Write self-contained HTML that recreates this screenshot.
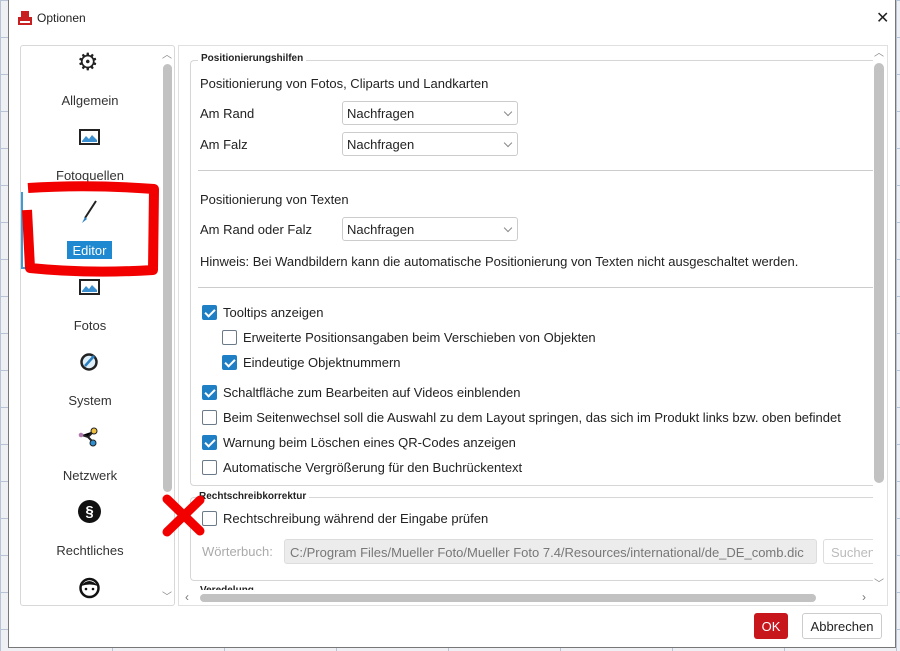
<!DOCTYPE html>
<html><head><meta charset="utf-8"><style>
*{box-sizing:border-box;margin:0;padding:0}
body{width:900px;height:651px;overflow:hidden;position:relative;font-family:"Liberation Sans",sans-serif;font-size:13px;color:#222;background:#eef0f4;
background-image:linear-gradient(#b9c3d6 1px,transparent 1px),linear-gradient(90deg,#b9c3d6 1px,transparent 1px);background-size:112px 37px}
.a{position:absolute}
#dlg{left:8px;top:0;width:888px;height:648px;background:#fff;border:1px solid #777;border-top:none}
.t{position:absolute;white-space:nowrap}
.dd{position:absolute;left:342px;width:176px;height:24px;border:1px solid #ccc;border-radius:3px;background:#fff;padding:4px 0 0 4px}
.dd::after{content:"";position:absolute;right:6px;top:7px;width:5px;height:5px;border-right:1px solid #888;border-bottom:1px solid #888;transform:rotate(45deg)}
.cb{position:absolute;width:15px;height:15px;border:1px solid #6a7a88;border-radius:2px;background:#fff}
.cb.on{background:#1f7fc4;border-color:#1f7fc4}
.cb.on::after{content:"";position:absolute;left:4px;top:1px;width:4px;height:8px;border-right:2px solid #fff;border-bottom:2px solid #fff;transform:rotate(45deg)}
.lbl{position:absolute;width:140px;left:20px;text-align:center;color:#333}
.hl{position:absolute;height:1px;background:#ccc}
</style></head><body>
<div id="dlg" class="a"></div>
<!-- title -->
<svg class="a" style="left:17px;top:10px" width="16" height="16" viewBox="0 0 16 16"><rect x="4" y="1" width="8" height="7" fill="#c82020"/><rect x="1" y="7" width="14" height="8" fill="#c82020"/><rect x="3" y="11" width="10" height="2" fill="#fff"/></svg>
<div class="t" style="left:37px;top:11px;font-size:12px">Optionen</div>
<div class="t" style="left:876px;top:8px;font-size:16px">✕</div>
<!-- left panel -->
<div class="a" style="left:20px;top:45px;width:155px;height:561px;border:1px solid #d8d8d8;border-radius:3px;background:#fff"></div>
<div class="a" style="left:163px;top:64px;width:9px;height:428px;background:#c2c2c2;border-radius:5px"></div>
<div class="t" style="left:162px;top:46px;color:#888;font-size:10px">︿</div>
<div class="t" style="left:162px;top:588px;color:#888;font-size:10px">﹀</div>
<!-- icons -->
<div class="t" style="left:77px;top:48px;font-size:24px;color:#222">⚙</div>
<div class="lbl" style="top:93px">Allgemein</div>
<svg class="a" style="left:79px;top:129px" width="21" height="16"><rect x="1" y="1" width="19" height="14" fill="#fff" stroke="#222" stroke-width="2"/><path d="M3 12 L7 7 L10 10 L13 6 L18 11 V13 H3Z" fill="#3a8fd0"/></svg>
<div class="lbl" style="top:168px">Fotoquellen</div>
<div class="a" style="left:21px;top:192px;width:137px;height:77px;border:2px solid #3d9bd6;border-top:none;border-right:none;background:#fff"></div>
<svg class="a" style="left:80px;top:200px" width="18" height="24"><path d="M16 1 L5 18" stroke="#222" stroke-width="2"/><path d="M5 17 L2 23 L7 19Z" fill="#2a7fc0"/></svg>
<div class="a" style="left:67px;top:241px;width:45px;height:18px;background:#1e88d0;color:#fff;text-align:center;padding-top:2px">Editor</div>
<svg class="a" style="left:79px;top:279px" width="21" height="16"><rect x="1" y="1" width="19" height="14" fill="#fff" stroke="#222" stroke-width="2"/><path d="M3 12 L7 7 L10 10 L13 6 L18 11 V13 H3Z" fill="#3a8fd0"/></svg>
<div class="lbl" style="top:318px">Fotos</div>
<svg class="a" style="left:79px;top:352px" width="20" height="20"><circle cx="10" cy="10" r="7.5" fill="#dff0fa" stroke="#222" stroke-width="2.5"/><path d="M6 14 L15 4" stroke="#2a7fc0" stroke-width="2.5"/></svg>
<div class="lbl" style="top:393px">System</div>
<svg class="a" style="left:78px;top:426px" width="22" height="22"><path d="M4 9 L10 11 L16 5 M10 11 L15 16" stroke="#222" stroke-width="2"/><circle cx="3" cy="9" r="2.3" fill="#b07ab0"/><circle cx="16" cy="5" r="3" fill="#f0c040" stroke="#222"/><circle cx="15" cy="17" r="3" fill="#2e8fd0" stroke="#222"/></svg>
<div class="lbl" style="top:468px">Netzwerk</div>
<div class="a" style="left:78px;top:500px;width:23px;height:23px;border-radius:50%;background:#111;color:#fff;text-align:center;font-size:15px;font-weight:bold;line-height:23px">§</div>
<div class="lbl" style="top:543px">Rechtliches</div>
<svg class="a" style="left:78px;top:576px" width="23" height="24"><circle cx="11.5" cy="12" r="9" fill="#fff" stroke="#111" stroke-width="2.5"/><path d="M3 10 Q11 0 20 10 Q12 7 3 10Z" fill="#111"/><circle cx="8" cy="13" r="1.3" fill="#111"/><circle cx="15" cy="13" r="1.3" fill="#111"/></svg>
<!-- right area -->
<div class="a" style="left:178px;top:45px;width:710px;height:561px;border:1px solid #e0e0e0;background:#fff"></div>
<div class="a" style="left:874px;top:63px;width:10px;height:420px;background:#c2c2c2;border-radius:5px"></div>
<div class="t" style="left:874px;top:44px;color:#888;font-size:10px">︿</div>
<div class="t" style="left:874px;top:575px;color:#888;font-size:10px">﹀</div>
<div class="a" style="left:200px;top:594px;width:616px;height:8px;background:#c2c2c2;border-radius:4px"></div>
<div class="t" style="left:185px;top:590px;color:#777;font-size:12px">‹</div>
<div class="t" style="left:862px;top:590px;color:#777;font-size:12px">›</div>
<!-- group 1 -->
<div class="a" style="left:190px;top:60px;width:683px;height:426px;border:1px solid #d6d6d6;border-right:none;border-radius:4px 0 0 4px"></div>
<div class="t" style="left:198px;top:53px;background:#fff;padding:0 3px;font-size:10px;font-weight:bold">Positionierungshilfen</div>
<div class="t" style="left:200px;top:76px">Positionierung von Fotos, Cliparts und Landkarten</div>
<div class="t" style="left:200px;top:106px">Am Rand</div>
<div class="dd" style="top:101px">Nachfragen</div>
<div class="t" style="left:200px;top:137px">Am Falz</div>
<div class="dd" style="top:132px">Nachfragen</div>
<div class="hl" style="left:198px;top:170px;width:675px"></div>
<div class="t" style="left:200px;top:192px">Positionierung von Texten</div>
<div class="t" style="left:200px;top:222px">Am Rand oder Falz</div>
<div class="dd" style="top:217px">Nachfragen</div>
<div class="t" style="left:200px;top:254px">Hinweis: Bei Wandbildern kann die automatische Positionierung von Texten nicht ausgeschaltet werden.</div>
<div class="hl" style="left:198px;top:287px;width:675px"></div>
<div class="cb on" style="left:202px;top:305px"></div><div class="t" style="left:223px;top:305px">Tooltips anzeigen</div>
<div class="cb" style="left:222px;top:330px"></div><div class="t" style="left:243px;top:330px">Erweiterte Positionsangaben beim Verschieben von Objekten</div>
<div class="cb on" style="left:222px;top:355px"></div><div class="t" style="left:243px;top:355px">Eindeutige Objektnummern</div>
<div class="cb on" style="left:202px;top:385px"></div><div class="t" style="left:223px;top:385px">Schaltfläche zum Bearbeiten auf Videos einblenden</div>
<div class="cb" style="left:202px;top:410px"></div><div class="t" style="left:223px;top:410px">Beim Seitenwechsel soll die Auswahl zu dem Layout springen, das sich im Produkt links bzw. oben befindet</div>
<div class="cb on" style="left:202px;top:435px"></div><div class="t" style="left:223px;top:435px">Warnung beim Löschen eines QR-Codes anzeigen</div>
<div class="cb" style="left:202px;top:460px"></div><div class="t" style="left:223px;top:460px">Automatische Vergrößerung für den Buchrückentext</div>
<!-- group 2 -->
<div class="a" style="left:190px;top:497px;width:683px;height:84px;border:1px solid #d6d6d6;border-right:none;border-radius:4px 0 0 4px"></div>
<div class="t" style="left:199px;top:491px;background:#fff;padding:0 3px 0 0;font-size:10px;font-weight:bold">Rechtschreibkorrektur</div>
<div class="cb" style="left:202px;top:511px"></div><div class="t" style="left:223px;top:511px">Rechtschreibung während der Eingabe prüfen</div>
<div class="t" style="left:202px;top:544px;color:#aaa">Wörterbuch:</div>
<div class="a" style="left:284px;top:539px;width:533px;height:25px;background:#ececec;border:1px solid #ddd;border-radius:3px;color:#777;padding:5px 0 0 5px;white-space:nowrap">C:/Program Files/Mueller Foto/Mueller Foto 7.4/Resources/international/de_DE_comb.dic</div>
<div class="a" style="left:823px;top:539px;width:50px;height:25px;border:1px solid #ddd;border-right:none;border-radius:3px 0 0 3px;color:#bbb;padding:5px 0 0 7px;overflow:hidden;white-space:nowrap">Suchen</div>
<div class="t" style="left:200px;top:585px;font-size:10px;font-weight:bold;height:5px;overflow:hidden">Veredelung</div>
<!-- red annotation (on top) -->
<svg class="a" style="left:18px;top:180px" width="150" height="102"><path d="M10 8 Q70 4 136 9 L135 90 Q70 94 12 88 L9 30" fill="none" stroke="#f20000" stroke-width="10" stroke-linejoin="round"/></svg>
<svg class="a" style="left:160px;top:493px" width="48" height="45"><path d="M7 6 L40 38 M40 7 L7 39" stroke="#f20000" stroke-width="9" stroke-linecap="round"/></svg>
<!-- buttons -->
<div class="a" style="left:754px;top:613px;width:34px;height:26px;background:#c8161d;color:#fff;border-radius:3px;text-align:center;padding-top:6px">OK</div>
<div class="a" style="left:802px;top:613px;width:80px;height:26px;border:1px solid #ccc;border-radius:3px;text-align:center;padding-top:5px">Abbrechen</div>
</body></html>
